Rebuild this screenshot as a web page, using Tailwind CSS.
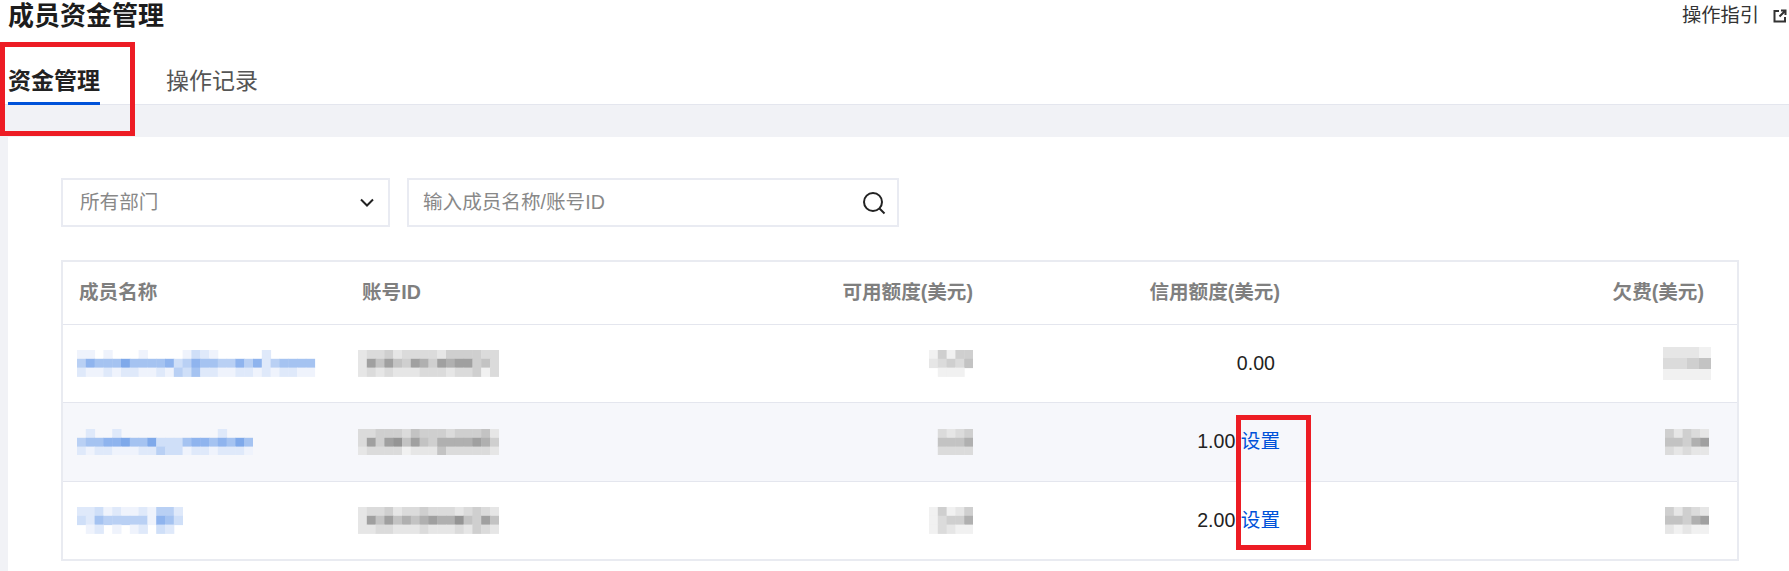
<!DOCTYPE html>
<html lang="zh-CN">
<head>
    <meta charset="UTF-8">
    <meta name="viewport" content="width=device-width, initial-scale=1.0">
    <title>成员资金管理</title>
    <script src="https://cdn.jsdelivr.net/npm/@tailwindcss/browser@4"></script>
</head>
<body class="relative h-[571px] overflow-hidden bg-white font-['Liberation_Sans','Noto_Sans_CJK_SC',sans-serif] text-[19.6px] text-[#222]">

    <!-- page header + tabs -->
    <header class="h-[105px] border-b border-[#e4e6ee] bg-white">
        <div class="flex h-[30px] items-center justify-between pt-[2px] pl-2 pr-[2px]">
            <h1 class="text-[26px] leading-[30px] font-bold text-[#1c1c1c]">成员资金管理</h1>
            <a class="flex items-center gap-[14px] text-[19.25px] text-[#333]">
                操作指引
                <svg class="h-[14px] w-[14px]" viewBox="0 0 14 14" fill="none" stroke="#333" stroke-width="2">
                    <path d="M6 2H1.500v10.500h10.500V8"/>
                    <path d="M8 1.500h4.500V6M12 2L6.500 7.500"/>
                </svg>
            </a>
        </div>
        <nav class="mt-[27px] flex gap-[66px] pl-2 text-[23px] leading-[48px]">
            <a class="h-[48px] border-b-[3px] border-[#0052d9] font-bold">资金管理</a>
            <a class="h-[48px] text-[#555]">操作记录</a>
        </nav>
    </header>

    <div class="h-[32px] bg-[#f1f2f6]"></div>

    <main class="flex h-[434px]">
        <div class="w-2 bg-[#f1f2f6]"></div>
        <section class="flex-1 pt-[41px] pl-[53px]">
            <div class="flex gap-[17px]">
                <div class="flex h-[49px] w-[329px] items-center justify-between border-2 border-[#e9ebf2] pr-[14px] pl-[17px] text-[#888]">
                    所有部门
                    <svg class="h-[9px] w-[14px]" viewBox="0 0 14 9" fill="none" stroke="#222" stroke-width="2">
                        <path d="M1 1.500l6 6 6-6"/>
                    </svg>
                </div>
                <div class="flex h-[49px] w-[492px] items-center justify-between border-2 border-[#e9ebf2] pr-[11px] pl-[14px] text-[#888]">
                    输入成员名称/账号ID
                    <svg class="h-[24px] w-[24px]" viewBox="0 0 24 24" fill="none" stroke="#222" stroke-width="2">
                        <circle cx="11" cy="11" r="9"/>
                        <path d="M17.500 17.500l5 5"/>
                    </svg>
                </div>
            </div>

            <div class="mt-[33px] w-[1678px] border-2 border-[#e9ebf1]">
                <table class="w-full table-fixed border-separate border-spacing-0">
                    <colgroup>
                        <col class="w-[281px]"><col class="w-[300px]"><col class="w-[347px]"><col class="w-[306px]"><col class="w-[440px]">
                    </colgroup>
                    <thead class="font-bold text-[#7f7f7f]">
                        <tr>
                            <th class="h-[63px] border-b border-[#e4e6ee] pl-4 text-left">成员名称</th>
                            <th class="border-b border-[#e4e6ee] pl-[18px] text-left">账号ID</th>
                            <th class="border-b border-[#e4e6ee] pr-[18px] text-right">可用额度(美元)</th>
                            <th class="border-b border-[#e4e6ee] pr-[17px] text-right">信用额度(美元)</th>
                            <th class="border-b border-[#e4e6ee] pr-[33px] text-right">欠费(美元)</th>
                        </tr>
                    </thead>
                    <tbody>
                        <tr>
                            <td class="h-[78px] border-b border-[#e4e6ee] pl-[14px]"><svg data-rows="1101000100001321000002000000|465557555563465544646245555|211212211214352211221212211" data-pal="blue" class="block"></svg></td>
                            <td class="border-b border-[#e4e6ee] pl-[14px]"><svg data-rows="2334233332444433|2757547647677453|2323222333233413" data-pal="gray" class="block"></svg></td>
                            <td class="border-b border-[#e4e6ee] pr-[18px]"><svg data-rows="14144|23435|01110" data-pal="gray" class="ml-auto block"></svg></td>
                            <td class="border-b border-[#e4e6ee] pr-[22px] text-right">0.00</td>
                            <td class="border-b border-[#e4e6ee] pr-[26px]"><svg data-rows="2221|3345|1111" data-pal="gray" data-w="12" data-h="11" class="ml-auto block"></svg></td>
                        </tr>
                        <tr class="bg-[#f6f7fb]">
                            <td class="h-[79px] border-b border-[#e4e6ee] pl-[14px]"><svg data-rows="02002000000000002000|45566755733356656575|21221112243312212221" data-pal="blue" class="block"></svg></td>
                            <td class="border-b border-[#e4e6ee] pl-[14px]"><svg data-rows="3344435444344452|3747857546666764|2333312225333332" data-pal="gray" class="block"></svg></td>
                            <td class="border-b border-[#e4e6ee] pr-[18px]"><svg data-rows="03234|05556|03333" data-pal="gray" class="ml-auto block"></svg></td>
                            <td class="border-b border-[#e4e6ee] pr-[17px] text-right">1.00 <a class="text-[#0052d9]">设置</a></td>
                            <td class="border-b border-[#e4e6ee] pr-[28px]"><svg data-rows="42432|55467|32322" data-pal="gray" class="ml-auto block"></svg></td>
                        </tr>
                        <tr>
                            <td class="h-[77px] pl-[14px]"><svg data-rows="223121121442|325444441653|012010120320" data-pal="blue" class="block"></svg></td>
                            <td class="pl-[14px]"><svg data-rows="2334233433323432|2757565676685475|2233222322232432" data-pal="gray" class="block"></svg></td>
                            <td class="pr-[18px]"><svg data-rows="14124|13446|13211" data-pal="gray" class="ml-auto block"></svg></td>
                            <td class="pr-[17px] text-right">2.00 <a class="text-[#0052d9]">设置</a></td>
                            <td class="pr-[28px]"><svg data-rows="42432|55467|21211" data-pal="gray" class="ml-auto block"></svg></td>
                        </tr>
                    </tbody>
                </table>
            </div>
        </section>
    </main>

    <!-- red annotation boxes drawn over the screenshot -->
    <div class="absolute top-[42px] left-0 h-[94px] w-[135px] border-[5px] border-[#ed1c24]"></div>
    <div class="absolute top-[415px] left-[1236px] h-[135px] w-[75px] border-[5px] border-[#ed1c24]"></div>

    <script>
        // blurred values in the table are drawn as small colour mosaics
        const palettes = {
            blue: ["none", "#eff3fc", "#dfe9fa", "#cfdff8", "#b9d0f4", "#a5c3f1", "#8fb4ee", "#7fa9ea"],
            gray: ["none", "#f1f1f1", "#e6e6e6", "#dbdbdb", "#cfcfcf", "#c3c3c3", "#b0b0b0", "#a0a0a0", "#959595"]
        };

        document.querySelectorAll("svg[data-rows]").forEach(svg => {
            const rows = svg.dataset.rows.split("|");
            const pal = palettes[svg.dataset.pal];
            const w = Number(svg.dataset.w || 8.8);
            const h = Number(svg.dataset.h || 8.8);
            svg.setAttribute("width", rows[0].length * w);
            svg.setAttribute("height", rows.length * h);
            svg.innerHTML = rows.map((row, y) =>
                [...row].map((c, x) =>
                    `<rect x="${x * w}" y="${y * h}" width="${w + 0.5}" height="${h + 0.5}" fill="${pal[c]}"/>`
                ).join("")
            ).join("");
        });
    </script>
</body>
</html>
